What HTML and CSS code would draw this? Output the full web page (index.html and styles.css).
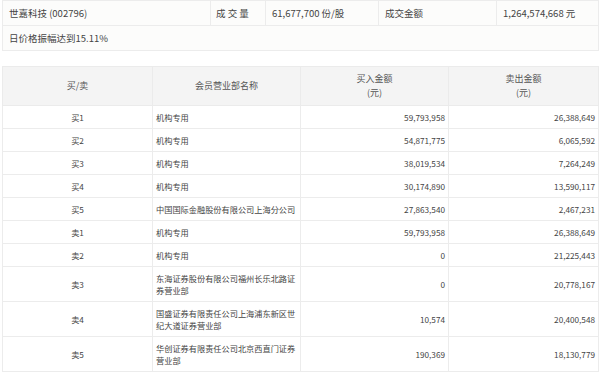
FILE: index.html
```html
<!DOCTYPE html>
<html lang="zh-CN">
<head>
<meta charset="utf-8">
<link rel="stylesheet" href="styles.css">
</head>
<body>
<table class="summary">
  <colgroup>
    <col class="c1"><col class="c2"><col class="c3"><col class="c4"><col class="c5">
  </colgroup>
  <tr>
    <td>世嘉科技 (002796)</td>
    <td class="spaced">成 交 量</td>
    <td>61,677,700 份/股</td>
    <td>成交金额</td>
    <td>1,264,574,668 元</td>
  </tr>
  <tr>
    <td colspan="5">日价格振幅达到15.11%</td>
  </tr>
</table>

<table class="detail">
  <colgroup>
    <col class="d1"><col class="d2"><col class="d3"><col class="d4">
  </colgroup>
  <thead>
    <tr>
      <th>买/卖</th>
      <th>会员营业部名称</th>
      <th>买入金额<br>(元)</th>
      <th>卖出金额<br>(元)</th>
    </tr>
  </thead>
  <tbody>
    <tr><td class="side">买1</td><td>机构专用</td><td class="num">59,793,958</td><td class="num">26,388,649</td></tr>
    <tr><td class="side">买2</td><td>机构专用</td><td class="num">54,871,775</td><td class="num">6,065,592</td></tr>
    <tr><td class="side">买3</td><td>机构专用</td><td class="num">38,019,534</td><td class="num">7,264,249</td></tr>
    <tr><td class="side">买4</td><td>机构专用</td><td class="num">30,174,890</td><td class="num">13,590,117</td></tr>
    <tr><td class="side">买5</td><td>中国国际金融股份有限公司上海分公司</td><td class="num">27,863,540</td><td class="num">2,467,231</td></tr>
    <tr><td class="side">卖1</td><td>机构专用</td><td class="num">59,793,958</td><td class="num">26,388,649</td></tr>
    <tr><td class="side">卖2</td><td>机构专用</td><td class="num">0</td><td class="num">21,225,443</td></tr>
    <tr class="tall"><td class="side">卖3</td><td>东海证券股份有限公司福州长乐北路证券营业部</td><td class="num">0</td><td class="num">20,778,167</td></tr>
    <tr class="tall"><td class="side">卖4</td><td>国盛证券有限责任公司上海浦东新区世纪大道证券营业部</td><td class="num">10,574</td><td class="num">20,400,548</td></tr>
    <tr class="tall"><td class="side">卖5</td><td>华创证券有限责任公司北京西直门证券营业部</td><td class="num">190,369</td><td class="num">18,130,779</td></tr>
  </tbody>
</table>
</body>
</html>
```

FILE: styles.css
```css
html, body {
  margin: 0;
  padding: 0;
  background: #ffffff;
}
body {
  padding: 0 2px;
  font-family: "Noto Sans CJK SC", "Noto Sans", sans-serif;
  color: #444444;
}
table {
  border-collapse: collapse;
  table-layout: fixed;
  width: 596px;
}
.summary {
  background: #fcfcfb;
  font-size: 9.5px;
}
.summary td {
  border: 1px solid #ececec;
  height: 24px;
  padding: 0 6px;
  line-height: 14px;
  white-space: nowrap;
}
.summary .spaced { padding-left: 5px; }
.c1 { width: 208px; }
.c2 { width: 55px; }
.c3 { width: 113px; }
.c4 { width: 118px; }
.c5 { width: 102px; }

.detail {
  margin-top: 15px;
  font-size: 8.2px;
}
.d1 { width: 150px; }
.d2 { width: 148px; }
.d3 { width: 148px; }
.d4 { width: 150px; }
.detail th {
  background: #f4f4f4;
  font-weight: normal;
  font-size: 9px;
  line-height: 14px;
  height: 38px;
  padding: 0 4px;
  border: 1px solid #ebebeb;
  color: #555555;
}
.detail td {
  border: 1px solid #ececec;
  padding: 5px 3px 5px 3px;
  line-height: 12px;
  color: #444444;
}
.detail .side { text-align: center; }
.detail .num { text-align: right; }
```
